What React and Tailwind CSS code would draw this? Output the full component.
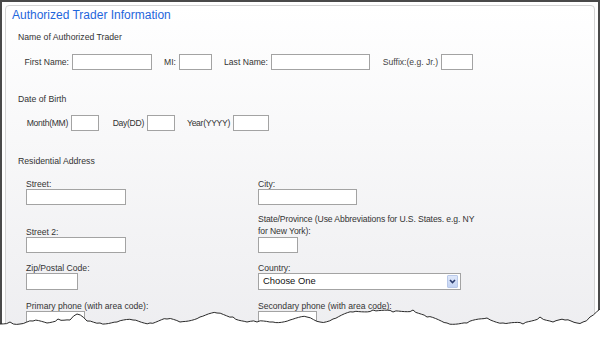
import React from "react";

const font = { fontFamily: '"Liberation Sans", Arial, sans-serif' };

function Input({ w, h = "h-[16px]" }) {
  return <div className={`${w} ${h} shrink-0 border border-[#a3a3a3] bg-white`} />;
}

function Group({ w, label, inputW, labelCls = "" }) {
  return (
    <div className={`${w} flex items-center justify-end gap-[3px] shrink-0`}>
      <span className={`whitespace-nowrap text-[8.6px] text-[#333] ${labelCls}`}>{label}</span>
      <Input w={inputW} />
    </div>
  );
}

const major = [
  [0, 324], [10, 322], [20, 324], [33, 321], [47, 323], [58, 319], [70, 320], [77, 314],
  [87, 321], [100, 323], [117, 322], [133, 320], [150, 323], [167, 319], [180, 322],
  [200, 317], [217, 313], [233, 317], [247, 322], [257, 322], [273, 322], [290, 320],
  [307, 317], [320, 322], [333, 319], [353, 312], [373, 310], [393, 312], [413, 310],
  [427, 317], [447, 323], [467, 323], [487, 318], [503, 323], [523, 324], [540, 317],
  [553, 322], [565, 320], [577, 323], [583, 322], [590, 317], [600, 309],
];

function tearPoints() {
  const pts = [];
  let k = 0;
  for (let i = 0; i < major.length - 1; i++) {
    const [x1, y1] = major[i];
    const [x2, y2] = major[i + 1];
    const n = Math.max(1, Math.round((x2 - x1) / 3));
    for (let j = 0; j < n; j++) {
      const t = j / n;
      const jit = j === 0 ? 0 : Math.sin(k * 12.9898) * 1.3;
      pts.push([x1 + (x2 - x1) * t, y1 + (y2 - y1) * t + jit]);
      k++;
    }
  }
  pts.push(major[major.length - 1]);
  return pts;
}

export default function App() {
  const pts = tearPoints();
  const line = pts.map((p) => `${p[0].toFixed(1)},${p[1].toFixed(1)}`).join(" ");
  const poly = `${line} 600,342 0,342`;
  return (
    <div className="relative w-[600px] h-[342px] overflow-hidden bg-white" style={font}>
      <div className="h-[360px] border-t-2 border-l-2 border-r-2 border-[#4a4a4a] p-[3px]">
        <div className="h-[380px] rounded-[4px] border border-[#d4d4d4] bg-gradient-to-b from-white to-[#ebebee]">
          <div className="pl-[6px] h-[18px] leading-[18px] text-[12px] text-[#1f66dc]">
            Authorized Trader Information
          </div>
          <div className="pl-[12px] mt-[7px] h-[12px] leading-[12px] text-[8.7px] text-[#333]">
            Name of Authorized Trader
          </div>
          <div className="mt-[11px] pl-[20px] flex">
            <Group w="w-[126px]" label="First Name:" inputW="w-[80px]" />
            <Group w="w-[60px]" label="MI:" inputW="w-[33px]" />
            <Group w="w-[158px]" label="Last Name:" inputW="w-[99px]" />
            <Group w="w-[103px]" label="Suffix:(e.g. Jr.)" inputW="w-[32px]" labelCls="text-[8.3px] text-[#444]" />
          </div>
          <div className="pl-[12px] mt-[23px] h-[12px] leading-[12px] text-[8.7px] text-[#333]">
            Date of Birth
          </div>
          <div className="mt-[10px] pl-[20px] flex">
            <Group w="w-[73px]" label="Month(MM)" inputW="w-[28px]" labelCls="tracking-[-0.3px]" />
            <Group w="w-[76px]" label="Day(DD)" inputW="w-[28px]" labelCls="tracking-[-0.3px]" />
            <Group w="w-[94px]" label="Year(YYYY)" inputW="w-[36px]" labelCls="tracking-[-0.3px]" />
          </div>
          <div className="pl-[12px] mt-[24px] h-[12px] leading-[12px] text-[8.7px] text-[#333]">
            Residential Address
          </div>
          <div className="pl-[20px] mt-[12px] grid grid-cols-[232px_1fr] items-end text-[8.6px] text-[#333]">
            <div>
              <div className="leading-[10px] h-[10px]">Street:</div>
              <Input w="w-[100px]" />
            </div>
            <div>
              <div className="leading-[10px] h-[10px]">City:</div>
              <Input w="w-[99px]" />
            </div>

            <div className="mt-[8px]">
              <div className="leading-[10px] h-[10px]">Street 2:</div>
              <Input w="w-[100px]" />
            </div>
            <div className="mt-[8px]">
              <div className="leading-[12px] whitespace-nowrap tracking-[-0.1px]">
                State/Province (Use Abbreviations for U.S. States. e.g. NY
                <br />
                for New York):
              </div>
              <Input w="w-[40px]" />
            </div>

            <div className="mt-[10px]">
              <div className="leading-[10px] h-[10px]">Zip/Postal Code:</div>
              <Input w="w-[52px]" h="h-[17px]" />
            </div>
            <div className="mt-[10px]">
              <div className="leading-[10px] h-[10px]">Country:</div>
              <div className="w-[203px] h-[17px] border border-[#a3a3a3] bg-white flex items-center justify-between pl-[4px] pr-[2px]">
                <span className="text-[9.4px] text-[#111]">Choose One</span>
                <div className="w-[11px] h-[13px] rounded-[1px] border border-[#b9c9ea] bg-gradient-to-b from-[#dfe8fa] to-[#c3d3f3] flex items-center justify-center">
                  <svg width="7" height="5" viewBox="0 0 7 5">
                    <path d="M1 1 L3.5 3.5 L6 1" fill="none" stroke="#2b3c6e" strokeWidth="1.6" />
                  </svg>
                </div>
              </div>
            </div>

            <div className="mt-[11px]">
              <div className="leading-[10px] h-[10px]">Primary phone (with area code):</div>
              <Input w="w-[59px]" />
            </div>
            <div className="mt-[11px]">
              <div className="leading-[10px] h-[10px]">Secondary phone (with area code):</div>
              <Input w="w-[59px]" />
            </div>
          </div>
        </div>
      </div>
      <svg className="absolute left-0 top-0 pointer-events-none" width="600" height="342" viewBox="0 0 600 342">
        <polygon points={poly} fill="#ffffff" />
        <polyline points={line} fill="none" stroke="#2a2a2a" strokeWidth="1" />
      </svg>
    </div>
  );
}
